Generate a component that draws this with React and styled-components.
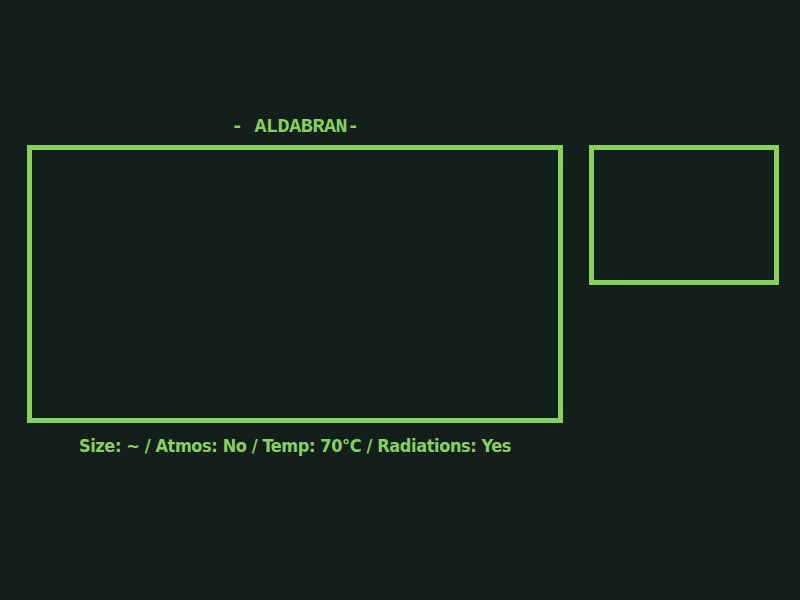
import React from "react";
import styled, { createGlobalStyle } from "styled-components";

const GREEN = "#87d25a";
const BG = "#131f1a";

const Global = createGlobalStyle`
  html, body { margin: 0; padding: 0; background: ${BG}; }
  body { width: 800px; height: 600px; overflow: hidden; }
`;

const Page = styled.div`
  width: 800px;
  height: 600px;
  box-sizing: border-box;
  padding: 115px 0 0 27px;
  display: grid;
  grid-template-columns: 536px 190px;
  grid-template-rows: auto auto auto;
  column-gap: 26px;
  align-content: start;
  color: ${GREEN};
`;

const Title = styled.div`
  grid-column: 1;
  grid-row: 1;
  text-align: center;
  font-family: "Liberation Mono", monospace;
  font-weight: bold;
  font-size: 20px;
  letter-spacing: -0.4px;
  line-height: 23px;
  margin-bottom: 7px;
  white-space: pre;
`;

const Frame = styled.div`
  grid-row: 2;
  box-sizing: border-box;
  border: 5px solid ${GREEN};
  width: ${(p) => p.$w}px;
  height: ${(p) => p.$h}px;
`;

const Caption = styled.div`
  grid-column: 1;
  grid-row: 3;
  text-align: center;
  font-family: "DejaVu Sans Condensed", "DejaVu Sans", sans-serif;
  font-weight: bold;
  font-size: 18px;
  letter-spacing: -0.4px;
  line-height: 22px;
  margin-top: 12px;
  white-space: pre;
`;

export default function App() {
  return (
    <>
      <Global />
      <Page>
        <Title>- ALDABRAN-</Title>
        <Frame $w={536} $h={278} />
        <Frame $w={190} $h={140} />
        <Caption>Size: ~ / Atmos: No / Temp: 70°C / Radiations: Yes</Caption>
      </Page>
    </>
  );
}
